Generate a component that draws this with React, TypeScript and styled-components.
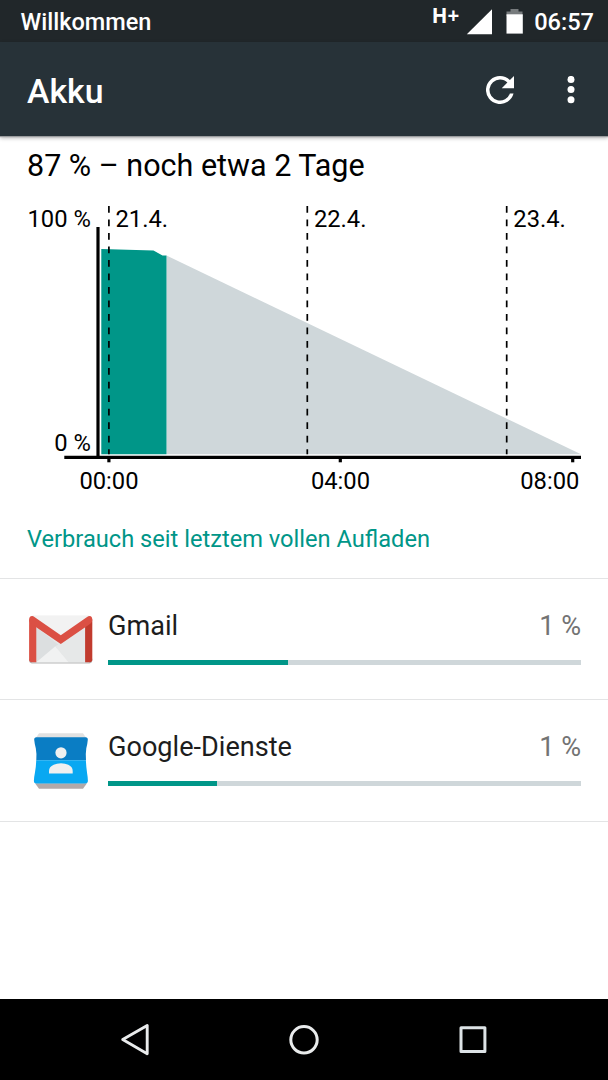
import React from 'react';
import styled, { createGlobalStyle } from 'styled-components';

const Global = createGlobalStyle`
  * { box-sizing: border-box; }
  body { margin: 0; background: #fff; font-family: Roboto, "Liberation Sans", sans-serif; }
`;

const Screen = styled.div`
  width: 608px;
  height: 1080px;
  display: flex;
  flex-direction: column;
  background: #fff;
  overflow: hidden;
`;

const StatusBar = styled.header`
  flex: none;
  height: 42px;
  padding: 2px 14px 0 20.5px;
  display: flex;
  align-items: center;
  background: #21272a;
  color: #fff;
  font-size: 23.5px;
  font-weight: 500;
  line-height: 40px;
`;

const Carrier = styled.span`
  flex: 1;
`;

const NetworkType = styled.span`
  align-self: flex-start;
  font-family: "Open Sans", sans-serif;
  font-size: 20.5px;
  font-weight: 700;
  line-height: 26px;
`;

const SignalIcon = styled.svg`
  flex: none;
  margin: 0 14px 1px 7px;
`;

const BatteryIcon = styled.svg`
  flex: none;
  margin: 0 11px 1px 0;
`;

const Clock = styled.span`
  font-size: 23.6px;
`;

const AppBar = styled.div`
  flex: none;
  height: 94px;
  padding: 0 27px;
  display: flex;
  align-items: center;
  background: #273238;
  box-shadow: 0 1px 1px #9a9c9e, 0 2px 4px rgba(0, 0, 0, 0.3);
  color: #fff;
  z-index: 1;
`;

const Title = styled.h1`
  flex: 1;
  margin: 0;
  padding-top: 6px;
  font-size: 33.8px;
  font-weight: 500;
  line-height: 40px;
`;

const RefreshIcon = styled.svg`
  margin: 1px 53px 0 0;
`;

const MoreIcon = styled.svg`
  margin: 1px 6px 0 0;
`;

const Content = styled.main`
  flex: 1;
  display: flex;
  flex-direction: column;
`;

const Summary = styled.div`
  padding: 10px 27px 0;
  height: 64px;
  color: #000;
  font-size: 30.5px;
  line-height: 40px;
`;

const Chart = styled.svg`
  flex: none;
  display: block;
  font-size: 23.75px;
  fill: #000;
`;

const SectionTitle = styled.h2`
  margin: 0;
  height: 78px;
  padding: 19px 27px 0;
  color: #009688;
  font-size: 23.65px;
  font-weight: 400;
  line-height: 40px;
`;

const AppRow = styled.div`
  display: flex;
  height: 121.4px;
  padding-right: 27px;
  border-top: 1px solid #e3e4e5;
`;

const IconCell = styled.div`
  width: 108px;
  padding: 27px 0 0 27px;
`;

const RowBody = styled.div`
  flex: 1;
  padding-top: 27px;
`;

const RowHeader = styled.div`
  display: flex;
  justify-content: space-between;
  font-size: 27.1px;
  line-height: 40px;
`;

const AppName = styled.span`
  color: #1d1d1d;
`;

const Percent = styled.span`
  color: #737373;
`;

const Track = styled.div`
  margin-top: 14px;
  height: 5px;
  background: #cfd7da;
`;

const Fill = styled.div`
  height: 100%;
  background: #009688;
`;

const ListEnd = styled.div`
  height: 1px;
  background: #e3e4e5;
`;

const NavBar = styled.nav`
  flex: none;
  height: 81px;
  display: flex;
  justify-content: space-between;
  align-items: center;
  padding: 0 116px;
  background: #000;
`;

const GmailIcon = () => (
  <svg width="68" height="68" viewBox="27.2 605.8 68 68">
    <path d="M32 663.2h57.5q2.6 0 3-2.6v-2H29.300v2q.4 2.600 2.700 2.600z" fill="#b5b5b5" />
    <path d="M32 615.500h57.500v46.700H32z" fill="#e6e7e7" />
    <path d="M33 615.500h56L61 638z" fill="#f2f2f2" />
    <path d="M36.500 627L60 645.500 36.500 662z" fill="#dcdfe0" />
    <path d="M36.500 662L55.500 646 69 662z" fill="#f1f2f2" />
    <path d="M61 643l24.500-17v36H69L55.500 646z" fill="#e6e8e8" />
    <path d="M36.500 662H32q-2.700 0-2.700-2.700V619l7.200 6z" fill="#db5044" />
    <path d="M85.300 625l7.200-6v40.300q0 2.700-2.700 2.700h-4.500z" fill="#c13b2e" />
    <path d="M29.300 619.500q0-3.500 3-3.700 1 0 2.300 1L61 635l26.300-18.200q1.300-1 2.500-1 2.700.2 2.700 3.700 0 2.700-2 4.100L61 643.800l-29.700-20.200q-2-1.400-2-4.100z" fill="#db5044" />
  </svg>
);

const ServicesIcon = () => (
  <svg width="68" height="68" viewBox="27 726.700 68 68">
    <path d="M39 733h44l4 6H35z" fill="#e1e1e1" />
    <path d="M35 783h52l-4 5.500H39z" fill="#b2a9a9" />
    <path d="M36.500 737H85.500q2.500 0 2.300 2.500-.3 4-1.500 8.500-.9 6-.3 12H36.300q.6-6-.5-12-1.300-5-1.600-8.500-.2-2.500 2.300-2.500z" fill="#0a7dc4" />
    <path d="M36.200 760h49.700q.2 6 1.200 13 .8 4.500.8 7.500 0 2.700-2.700 2.700H36.500q-2.700 0-2.600-2.700.1-3.500 1.100-8.500 1.100-6 1.200-12z" fill="#09a8f2" />
    <circle cx="61" cy="752.500" r="5.600" fill="#f0f0f0" />
    <path d="M49 773.300v-2.600q0-4.200 4.700-6.200 3-1.500 7.300-1.500t7.300 1.500q4.400 2 4.400 6.200v2.600z" fill="#f0f0f0" />
  </svg>
);

const days = [
  { x: 108.9, label: '21.4.' },
  { x: 307.3, label: '22.4.' },
  { x: 506.7, label: '23.4.' },
];

const hours = [
  { tick: 108.9, x: 109, label: '00:00' },
  { tick: 340.3, x: 340.5, label: '04:00' },
  { tick: 572.7, x: 549.8, label: '08:00' },
];

const usage = [
  { name: 'Gmail', share: '1 %', width: 38, icon: <GmailIcon /> },
  { name: 'Google-Dienste', share: '1 %', width: 23, icon: <ServicesIcon /> },
];

export default function App() {
  return (
    <Screen>
      <Global />
      <StatusBar>
        <Carrier>Willkommen</Carrier>
        <NetworkType>H+</NetworkType>
        <SignalIcon width="26" height="26" viewBox="0 0 26 26">
          <path d="M26 0.200v25H0.800z" fill="#fff" />
        </SignalIcon>
        <BatteryIcon width="17" height="26" viewBox="0 0 17 26">
          <path d="M4.500 0h8v2.500h4V7H0.500V2.500h4z" fill="#777b7d" />
          <path d="M0.500 5.300h16.300V24.600H0.500z" fill="#fff" />
        </BatteryIcon>
        <Clock>06:57</Clock>
      </StatusBar>
      <AppBar>
        <Title>Akku</Title>
        <RefreshIcon width="28" height="28" viewBox="4 4 16 16" fill="#fff">
          <path d="M17.650 6.350A7.960 7.960 0 0 0 12 4a8 8 0 1 0 7.730 10h-2.080A6 6 0 1 1 12 6c1.660 0 3.140.69 4.220 1.780L13 11h7V4l-2.350 2.350z" />
        </RefreshIcon>
        <MoreIcon width="8" height="28" viewBox="0 0 8 28" fill="#fff">
          <circle cx="4" cy="3.400" r="3.500" />
          <circle cx="4" cy="13.600" r="3.500" />
          <circle cx="4" cy="23.800" r="3.500" />
        </MoreIcon>
      </AppBar>
      <Content>
        <Summary>87 % – noch etwa 2 Tage</Summary>
        <Chart width="608" height="300" viewBox="0 200 608 300">
          <path d="M166.500 255.500L581 454.300H166.500z" fill="#cfd7da" />
          <path d="M101.300 249L153.500 250.500 162.500 255.500H166.500V454.300H101.300z" fill="#009688" />
          <path d="M96.400 227h3.200v229h-3.200z" />
          <path d="M64.300 455.700H581v3.200H64.300z" />
          {days.map((d) => (
            <React.Fragment key={d.label}>
              <path d={`M${d.x} 206V454.300`} stroke="#000" strokeWidth="1.700" strokeDasharray="6.750 6.760" />
              <text x={d.x + 6.6} y="227">{d.label}</text>
            </React.Fragment>
          ))}
          {hours.map((h) => (
            <React.Fragment key={h.label}>
              <path d={`M${h.tick} 458V462.300`} stroke="#000" strokeWidth="3.200" />
              <text x={h.x} y="488.700" textAnchor="middle">{h.label}</text>
            </React.Fragment>
          ))}
          <text x="90.800" y="227" textAnchor="end">100 %</text>
          <text x="90.800" y="450.800" textAnchor="end">0 %</text>
        </Chart>
        <SectionTitle>Verbrauch seit letztem vollen Aufladen</SectionTitle>
        {usage.map((u) => (
          <AppRow key={u.name}>
            <IconCell>{u.icon}</IconCell>
            <RowBody>
              <RowHeader>
                <AppName>{u.name}</AppName>
                <Percent>{u.share}</Percent>
              </RowHeader>
              <Track>
                <Fill style={{ width: `${u.width}%` }} />
              </Track>
            </RowBody>
          </AppRow>
        ))}
        <ListEnd />
      </Content>
      <NavBar>
        <svg width="38" height="40" viewBox="0 0 38 40" fill="none" stroke="#e9ebec" strokeWidth="2.900" strokeLinejoin="round">
          <path d="M6.700 19.600L31.200 5.500V33.700z" />
        </svg>
        <svg width="38" height="40" viewBox="0 0 38 40" fill="none" stroke="#e9ebec" strokeWidth="3">
          <circle cx="19" cy="19.800" r="13.200" />
        </svg>
        <svg width="38" height="40" viewBox="0 0 38 40" fill="none" stroke="#dde3e6" strokeWidth="3" strokeLinejoin="round">
          <path d="M7 7.700h23.900v23.900h-23.900z" />
        </svg>
      </NavBar>
    </Screen>
  );
}
